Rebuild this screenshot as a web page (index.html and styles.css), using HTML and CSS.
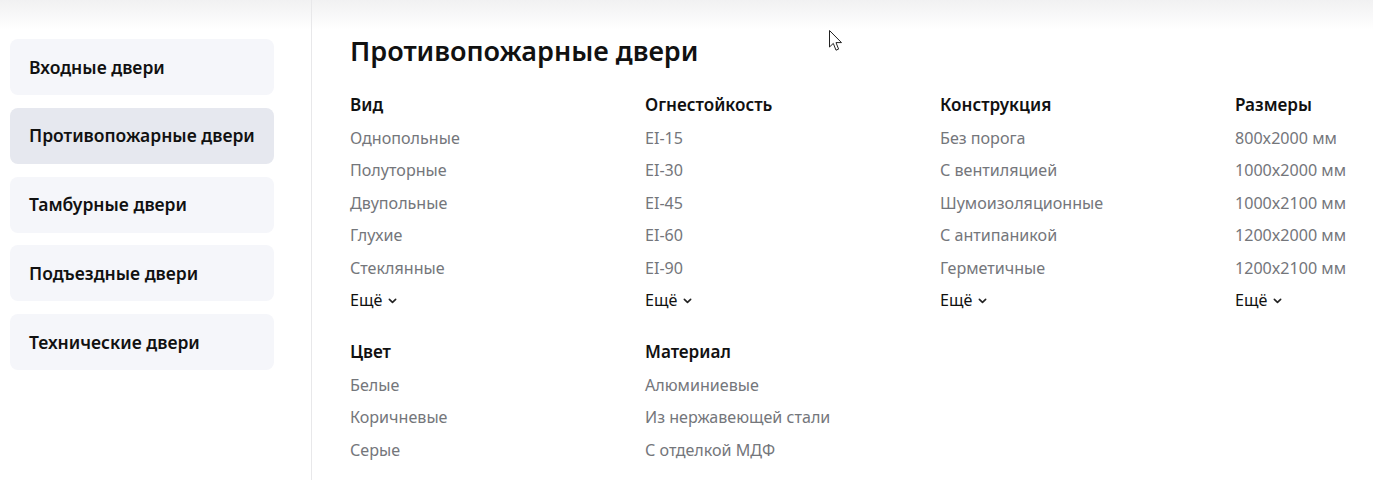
FILE: index.html
```html
<!DOCTYPE html>
<html lang="ru">
<head>
<meta charset="utf-8">
<title>Противопожарные двери</title>
<link rel="stylesheet" href="styles.css">
</head>
<body>
<div class="page">
  <aside class="sidebar">
    <a class="cat">Входные двери</a>
    <a class="cat active">Противопожарные двери</a>
    <a class="cat">Тамбурные двери</a>
    <a class="cat">Подъездные двери</a>
    <a class="cat">Технические двери</a>
  </aside>
  <main class="main">
    <h1 class="title">Противопожарные двери</h1>
    <div class="grid">
      <div class="group">
        <div class="gh">Вид</div>
        <div class="gi">Однопольные</div>
        <div class="gi">Полуторные</div>
        <div class="gi">Двупольные</div>
        <div class="gi">Глухие</div>
        <div class="gi">Стеклянные</div>
        <div class="more">Ещё <svg class="chev" viewBox="0 0 10 6" width="9" height="6"><path d="M1.5 1.2 5 4.6 8.5 1.2" fill="none" stroke="#222" stroke-width="1.8" stroke-linecap="round" stroke-linejoin="round"/></svg></div>
      </div>
      <div class="group">
        <div class="gh">Огнестойкость</div>
        <div class="gi">EI-15</div>
        <div class="gi">EI-30</div>
        <div class="gi">EI-45</div>
        <div class="gi">EI-60</div>
        <div class="gi">EI-90</div>
        <div class="more">Ещё <svg class="chev" viewBox="0 0 10 6" width="9" height="6"><path d="M1.5 1.2 5 4.6 8.5 1.2" fill="none" stroke="#222" stroke-width="1.8" stroke-linecap="round" stroke-linejoin="round"/></svg></div>
      </div>
      <div class="group">
        <div class="gh">Конструкция</div>
        <div class="gi">Без порога</div>
        <div class="gi">С вентиляцией</div>
        <div class="gi">Шумоизоляционные</div>
        <div class="gi">С антипаникой</div>
        <div class="gi">Герметичные</div>
        <div class="more">Ещё <svg class="chev" viewBox="0 0 10 6" width="9" height="6"><path d="M1.5 1.2 5 4.6 8.5 1.2" fill="none" stroke="#222" stroke-width="1.8" stroke-linecap="round" stroke-linejoin="round"/></svg></div>
      </div>
      <div class="group">
        <div class="gh">Размеры</div>
        <div class="gi">800x2000 мм</div>
        <div class="gi">1000x2000 мм</div>
        <div class="gi">1000x2100 мм</div>
        <div class="gi">1200x2000 мм</div>
        <div class="gi">1200x2100 мм</div>
        <div class="more">Ещё <svg class="chev" viewBox="0 0 10 6" width="9" height="6"><path d="M1.5 1.2 5 4.6 8.5 1.2" fill="none" stroke="#222" stroke-width="1.8" stroke-linecap="round" stroke-linejoin="round"/></svg></div>
      </div>
      <div class="group">
        <div class="gh">Цвет</div>
        <div class="gi">Белые</div>
        <div class="gi">Коричневые</div>
        <div class="gi">Серые</div>
      </div>
      <div class="group">
        <div class="gh">Материал</div>
        <div class="gi">Алюминиевые</div>
        <div class="gi">Из нержавеющей стали</div>
        <div class="gi">С отделкой МДФ</div>
      </div>
    </div>
  </main>
</div>
<svg class="cursor" width="14" height="22" viewBox="0 0 14 22"><path d="M0.5 0.5 V17 L4.3 13.4 L7 20.2 L9.6 19.1 L7 12.6 H12.5 Z" fill="#fff" stroke="#222" stroke-width="1" stroke-linejoin="miter"/></svg>
</body>
</html>
```
FILE: styles.css
```css
html, body {
  margin: 0;
  padding: 0;
}
body {
  background: #fff linear-gradient(#f1f1f2, #fff 30px) no-repeat;
  font-family: "Noto Sans", "Open Sans", sans-serif;
  color: #111;
  height: 480px;
  overflow: hidden;
}
.page {
  display: flex;
  height: 480px;
}
.sidebar {
  width: 264px;
  flex: none;
  padding: 39px 37px 0 10px;
  border-right: 1px solid #e8e8ea;
  display: flex;
  flex-direction: column;
  gap: 12.75px;
}
.cat {
  box-sizing: border-box;
  display: flex;
  align-items: center;
  height: 56px;
  padding: 0 19px 1px;
  border-radius: 8px;
  background: #f5f6fa;
  font-size: 17.5px;
  font-weight: 600;
  color: #111;
}
.cat.active {
  background: #e6e8ef;
}
.main {
  padding: 34px 0 0 38px;
  flex: 1;
  min-width: 0;
}
.title {
  margin: 0;
  font-size: 27px;
  line-height: 34px;
  font-weight: 600;
  color: #111;
}
.grid {
  margin-top: 21px;
  display: grid;
  grid-template-columns: 295px 295px 295px minmax(0, 1fr);
  row-gap: 19.5px;
}
.group {
  line-height: 32.5px;
  font-size: 16.1px;
  white-space: nowrap;
}
.gh {
  font-size: 17.1px;
  font-weight: 600;
  color: #111;
}
.gi {
  color: #74767b;
}
.more {
  color: #111;
  display: flex;
  align-items: center;
  gap: 6px;
}
.chev {
  margin-top: 2px;
}
.cursor {
  position: absolute;
  left: 829px;
  top: 30px;
}
```
